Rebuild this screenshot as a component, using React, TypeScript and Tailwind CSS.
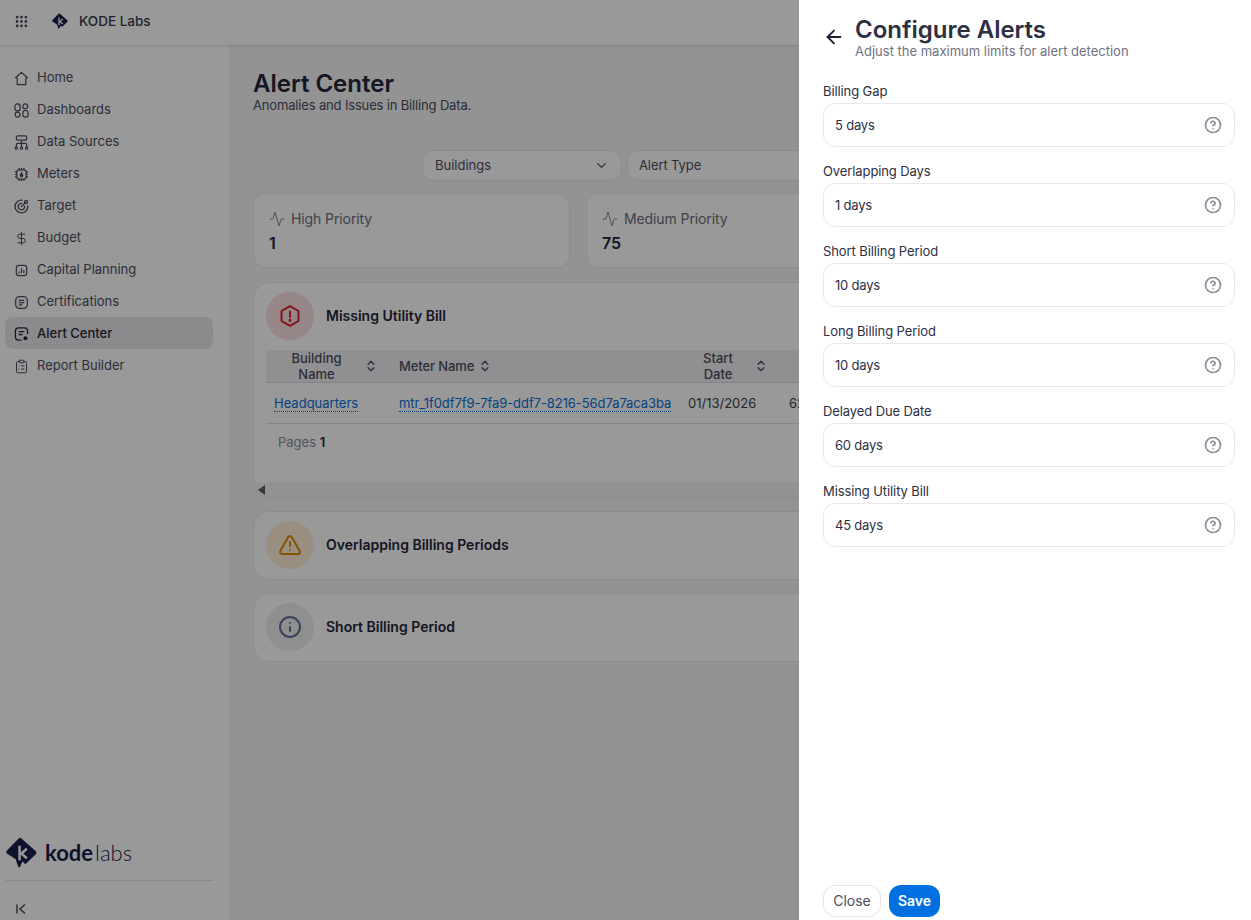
import React from 'react';
import {
    Grip, DollarSign, ClipboardList, Activity, ChevronDown, ChevronsUpDown,
    TriangleAlert, Info, CircleHelp, ArrowLeft,
} from 'lucide-react';

const KodeMark: React.FC<{ className?: string }> = ({ className }) => (
    <svg viewBox="0 0 32 32" className={className} fill="currentColor">
        <path d="M13 1.5 Q14.5 0 16 1.5 L30.5 14.5 Q32 16 31 17.5 L20 28 L17 25 L14.5 31 Q13.5 32 12.5 30.5 L10 23 L1 17 Q-0.5 15.5 1 14 Z" />
        <path d="M14 9 V24 M21.5 12 L16 17 L21.5 22" fill="none" stroke="#fff" strokeWidth="2.6" />
    </svg>
);

const HomeIcon = () => (
    <svg viewBox="0 0 16 16" className="w-[15px] h-[15px]" fill="none" stroke="currentColor" strokeWidth="1.3" strokeLinejoin="round">
        <path d="M8 1.5 L14.5 7.2 H12.6 V14 Q12.6 14.5 12 14.5 H4 Q3.4 14.5 3.4 14 V7.2 H1.5 Z" />
    </svg>
);

const DashboardsIcon = () => (
    <svg viewBox="0 0 16 16" className="w-[15px] h-[15px]" fill="none" stroke="currentColor" strokeWidth="1.3">
        <rect x="1" y="1" width="5.5" height="7.5" rx="2.5" />
        <circle cx="12" cy="3.6" r="2.6" />
        <circle cx="3.8" cy="12.4" r="2.6" />
        <rect x="9.5" y="8" width="5.5" height="7" rx="2.5" />
    </svg>
);

const DataSourcesIcon = () => (
    <svg viewBox="0 0 16 16" className="w-[15px] h-[15px]" fill="none" stroke="currentColor" strokeWidth="1.3">
        <rect x="2.5" y="1" width="11" height="4.5" rx="1.5" />
        <path d="M8 5.5V13M2.5 13V10.5Q2.5 9 4 9H12Q13.5 9 13.5 10.5V13" />
        <circle cx="2.5" cy="14" r="1.2" />
        <circle cx="8" cy="14" r="1.2" />
        <circle cx="13.5" cy="14" r="1.2" />
    </svg>
);

const MetersIcon = () => (
    <svg viewBox="0 0 16 16" className="w-[15px] h-[15px]" fill="none" stroke="currentColor" strokeWidth="1.3">
        <rect x="3" y="3" width="10" height="10" rx="2.5" />
        <path d="M5.5 1V3M8 1V3M10.5 1V3M5.5 13V15M8 13V15M10.5 13V15M1 5.5H3M1 8H3M1 10.5H3M13 5.5H15M13 8H15M13 10.5H15" />
        <path d="M8 5V7.5" />
        <circle cx="8" cy="9" r="1.3" fill="currentColor" />
    </svg>
);

const TargetIcon = () => (
    <svg viewBox="0 0 16 16" className="w-[15px] h-[15px]" fill="none" stroke="currentColor" strokeWidth="1.4" strokeLinecap="round">
        <path d="M8.5 1.3 A6.8 6.8 0 1 0 14.7 7.5" />
        <path d="M8.2 4.6 A3.5 3.5 0 1 0 11.4 7.8" />
        <path d="M8 8 L12 4" />
        <circle cx="12.8" cy="3.2" r="1.6" />
    </svg>
);

const CapitalIcon = () => (
    <svg viewBox="0 0 16 16" className="w-[15px] h-[15px]" fill="none" stroke="currentColor" strokeWidth="1.3">
        <rect x="2.5" y="2.5" width="11" height="11" rx="2.5" />
        <path d="M5.5 11V9M8 11V5.5M10.5 11V7.5" />
    </svg>
);

const CertificationsIcon = () => (
    <svg viewBox="0 0 16 16" className="w-[15px] h-[15px]" fill="none" stroke="currentColor" strokeWidth="1.3">
        <rect x="1.8" y="1.8" width="12.4" height="12.4" rx="4" />
        <path d="M5 5.8H11M5 8.2H11M5 10.6H9" />
    </svg>
);

const AlertCenterIcon = () => (
    <svg viewBox="0 0 16 16" className="w-4 h-4" fill="none" stroke="currentColor" strokeWidth="1.4">
        <path d="M8 14.5H5Q1.5 14.5 1.5 11V5Q1.5 1.5 5 1.5H11Q14.5 1.5 14.5 5V8" />
        <path d="M5 5.5H11M5 8.5H9" />
        <circle cx="12.2" cy="12.5" r="2.2" fill="currentColor" stroke="none" />
    </svg>
);

const HexAlertIcon = () => (
    <svg viewBox="0 0 24 24" className="w-6 h-6 text-[#dc1f26]" fill="none" stroke="currentColor" strokeWidth="2">
        <path d="M12 2.2 L20.5 7 V17 L12 21.8 L3.5 17 V7 Z" strokeLinejoin="round" />
        <path d="M12 7.5V13" strokeLinecap="round" />
        <circle cx="12" cy="16.3" r="0.6" fill="currentColor" />
    </svg>
);

const CollapseIcon = () => (
    <svg viewBox="0 0 12 12" className="w-3 h-3" fill="none" stroke="currentColor" strokeWidth="1.5">
        <path d="M2 1.5V10.5M10 1.5L5 6L10 10.5" />
    </svg>
);

const navItems = [
    { label: 'Home', icon: <HomeIcon /> },
    { label: 'Dashboards', icon: <DashboardsIcon /> },
    { label: 'Data Sources', icon: <DataSourcesIcon /> },
    { label: 'Meters', icon: <MetersIcon /> },
    { label: 'Target', icon: <TargetIcon /> },
    { label: 'Budget', icon: <DollarSign size={15} strokeWidth={1.6} /> },
    { label: 'Capital Planning', icon: <CapitalIcon /> },
    { label: 'Certifications', icon: <CertificationsIcon /> },
    { label: 'Alert Center', icon: <AlertCenterIcon />, active: true },
    { label: 'Report Builder', icon: <ClipboardList size={15} strokeWidth={1.6} /> },
];

const limits = [
    { label: 'Billing Gap', value: '5 days' },
    { label: 'Overlapping Days', value: '1 days' },
    { label: 'Short Billing Period', value: '10 days' },
    { label: 'Long Billing Period', value: '10 days' },
    { label: 'Delayed Due Date', value: '60 days' },
    { label: 'Missing Utility Bill', value: '45 days' },
];

const Sidebar = () => (
    <aside className="w-[229px] shrink-0 bg-white flex flex-col px-[5px] pt-4 h-[875px]">
        <nav className="flex flex-col">
            {navItems.map(item => (
                <div
                    key={item.label}
                    className={`h-8 flex items-center gap-2 pl-[9px] pt-[2px] rounded-lg w-[208px] text-[13px] ${item.active ? 'bg-[#e8e8ec] text-[#252738] font-medium' : 'text-[#4b4d5e]'}`}
                >
                    <span className="w-[15px] h-[15px] flex items-center justify-center">{item.icon}</span>
                    {item.label}
                </div>
            ))}
        </nav>
        <div className="mt-auto">
            <div className="flex items-center gap-2 text-[#1a1f4b] h-[36px] pl-px">
                <KodeMark className="w-[31px] h-[31px] mb-[2px]" />
                <span className="text-[22px] leading-none font-bold font-[family-name:Lato,sans-serif]">
                    kode<span className="font-light ml-[2px]">labs</span>
                </span>
            </div>
            <div className="border-t border-[#e4e4e7] w-[208px] mt-[9px] h-[40px] flex items-center pl-[10px] pt-[16px] text-[#4b4d5e]">
                <CollapseIcon />
            </div>
        </div>
    </aside>
);

const StatCard: React.FC<{ label: string; value: string }> = ({ label, value }) => (
    <div className="w-[317px] shrink-0 h-[75px] bg-white border border-[#e9e9ec] rounded-xl px-[15px] pt-[15px]">
        <div className="flex items-center gap-1.5 text-sm tracking-[-0.1px] text-[#6b6d7c]">
            <Activity size={16} strokeWidth={1.25} />
            {label}
        </div>
        <div className="mt-[2px] text-base font-semibold text-[#23253a]">{value}</div>
    </div>
);

const CollapsedCard: React.FC<{ title: string; tint: string; icon: React.ReactNode }> = ({ title, tint, icon }) => (
    <div className="h-[69px] bg-white border border-[#e9e9ec] rounded-2xl flex items-center gap-3 px-3 pb-[2px] w-[974px]">
        <span className={`w-12 h-12 rounded-full flex items-center justify-center ${tint}`}>{icon}</span>
        <span className="text-sm font-semibold text-[#23253a]">{title}</span>
    </div>
);

const SortIcon = () => <ChevronsUpDown size={14} strokeWidth={2.25} className="shrink-0 text-[#4b4d5e]" />;

const MissingBillCard = () => (
    <div className="h-[216px] bg-white border border-[#e9e9ec] rounded-2xl w-[974px] overflow-hidden flex flex-col">
        <div className="flex items-center gap-3 pl-3 pt-[9px]">
            <span className="w-12 h-12 rounded-full bg-[#fbdfe1] flex items-center justify-center"><HexAlertIcon /></span>
            <span className="text-sm font-semibold text-[#23253a]">Missing Utility Bill</span>
        </div>
        <div className="mx-3 mt-[10px] flex-1 text-[13px]">
            <div className="h-[33px] bg-[#f0f0f3] border-b border-[#dcdce0] flex items-center font-medium text-[#4b4d5e] leading-4">
                <div className="w-[125px] flex items-center pl-2 pr-2">
                    <span className="w-[85px] text-center">Building Name</span>
                    <span className="ml-[5px]"><SortIcon /></span>
                </div>
                <div className="w-[291px] flex items-center gap-1 pl-2 tracking-[-0.1px]">Meter Name <SortIcon /></div>
                <div className="w-[107px] flex items-center pl-[6px]">
                    <span className="w-[60px] text-center">Start Date</span>
                    <span className="ml-[6px]"><SortIcon /></span>
                </div>
            </div>
            <div className="h-[41px] border-b border-[#e0e0e4] flex items-center pt-[2px]">
                <div className="w-[125px] pl-2">
                    <span className="text-[#0b6fd6] border-b border-dotted border-[#0b6fd6]">Headquarters</span>
                </div>
                <div className="w-[291px] pl-2">
                    <span className="text-[#0b6fd6] border-b border-dotted border-[#0b6fd6] whitespace-nowrap tracking-[-0.07px]">mtr_1f0df7f9-7fa9-ddf7-8216-56d7a7aca3ba</span>
                </div>
                <div className="w-[107px] pl-[6px] text-[#3a3c4c]">01/13/2026</div>
                <div className="text-[#3a3c4c]">62</div>
            </div>
            <div className="pt-[9px] pl-3 text-[13px] text-[#8b8d99]">Pages <span className="font-semibold text-[#23253a]">1</span></div>
        </div>
        <div className="h-[15px] bg-[#f4f4f5] flex items-center pl-1">
            <span className="w-0 h-0 border-y-[5px] border-y-transparent border-r-[7px] border-r-[#5f5f5f]" />
        </div>
    </div>
);

const AlertDrawer = () => (
    <div className="absolute top-0 right-0 bottom-0 w-[452px] bg-white flex flex-col pl-6 pr-4">
        <div className="flex pt-4">
            <button className="mt-[9px] mr-[10px] h-6 text-[#1c1f33]">
                <ArrowLeft size={22} strokeWidth={2} />
            </button>
            <div>
                <h2 className="text-2xl leading-7 font-semibold text-[#2d2f43]">Configure Alerts</h2>
                <p className="text-[13px] leading-[14px] text-[#70727f]">Adjust the maximum limits for alert detection</p>
            </div>
        </div>
        <div className="mt-[23px] flex flex-col gap-[14px]">
            {limits.map(limit => (
                <div key={limit.label}>
                    <label className="block text-[13px] leading-5 mb-0.5 tracking-[-0.1px] text-[#2d2f43]">{limit.label}</label>
                    <div className="h-11 border border-[#e9e9ec] rounded-xl flex items-center justify-between pl-[11px] pr-[12px] text-[13px] tracking-[-0.2px] text-[#2d2f43]">
                        <span className="mt-[2px]">{limit.value}</span>
                        <CircleHelp size={18} strokeWidth={2.2} className="text-[#8b8d99]" />
                    </div>
                </div>
            ))}
        </div>
        <div className="mt-auto mb-[3px] flex gap-2">
            <button className="w-[58px] h-8 border border-[#e4e4e7] rounded-xl text-sm text-[#4b4d5e]">Close</button>
            <button className="w-[51px] h-8 bg-[#0070e0] rounded-xl text-sm font-semibold text-white">Save</button>
        </div>
    </div>
);

export default function App() {
    return (
        <div className="relative w-[1251px] h-[920px] overflow-hidden bg-white font-[family-name:Inter,sans-serif]">
            <header className="h-[45px] bg-white flex items-center pl-[14px] pb-[3px] gap-[23px] relative shadow-sm">
                <Grip size={15} strokeWidth={2.5} className="text-[#4b4d5e]" />
                <div className="flex items-center gap-[11px]">
                    <KodeMark className="w-4 h-4 text-[#1a1f4b]" />
                    <span className="text-[13.5px] font-medium text-[#3a3c4c]">KODE Labs</span>
                </div>
            </header>
            <div className="flex">
                <Sidebar />
                <main className="flex-1 bg-[#f5f5f6] h-[875px] pl-6 pt-[25px] overflow-hidden">
                    <h1 className="text-2xl leading-7 font-semibold text-[#23253a]">Alert Center</h1>
                    <p className="text-[13px] leading-[14px] tracking-[-0.16px] text-[#4b4d5e]">Anomalies and Issues in Billing Data.</p>
                    <div className="flex gap-[5px] mt-[38px] ml-[169px]">
                        <div className="w-[200px] h-[31px] bg-white border border-[#e9e9ec] rounded-xl flex items-center justify-between px-3 text-[13px] text-[#4b4d5e]">
                            Buildings
                            <ChevronDown size={15} strokeWidth={2} />
                        </div>
                        <div className="w-[200px] h-[31px] bg-white border border-[#e9e9ec] rounded-xl flex items-center pl-[11px] pr-3 text-[13px] tracking-[-0.1px] text-[#4b4d5e]">
                            Alert Type
                        </div>
                    </div>
                    <div className="flex gap-4 mt-[12px]">
                        <StatCard label="High Priority" value="1" />
                        <StatCard label="Medium Priority" value="75" />
                    </div>
                    <div className="flex flex-col gap-[13px] mt-[14px]">
                        <MissingBillCard />
                        <CollapsedCard title="Overlapping Billing Periods" tint="bg-[#fdeed8]" icon={<TriangleAlert size={24} strokeWidth={2} className="text-[#e08a00]" />} />
                        <CollapsedCard title="Short Billing Period" tint="bg-[#eeeef1]" icon={<Info size={24} strokeWidth={2} className="text-[#5f6f96]" />} />
                    </div>
                </main>
            </div>
            <div className="absolute inset-0 bg-black/40" />
            <AlertDrawer />
        </div>
    );
}
